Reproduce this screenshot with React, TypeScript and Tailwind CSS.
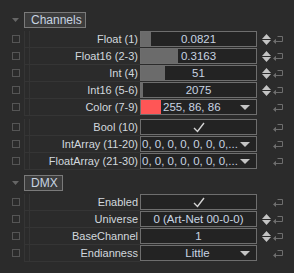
import React from 'react';

const font = { fontFamily: '"Liberation Sans", Arial, sans-serif' };

function Tri({ down = true, w = 10, h = 5, color = '#c4c4c4' }: { down?: boolean; w?: number; h?: number; color?: string }) {
  return (
    <svg width={w} height={h} viewBox={`0 0 ${w} ${h}`} className="block">
      <polygon points={down ? `0,0 ${w},0 ${w / 2},${h}` : `0,${h} ${w},${h} ${w / 2},0`} fill={color} />
    </svg>
  );
}

function Spinner() {
  return (
    <div className="flex flex-col items-center gap-[1px] w-[9px]">
      <Tri down={false} w={9} h={5} />
      <Tri w={9} h={5} />
    </div>
  );
}

function ResetIcon() {
  return (
    <svg width="11" height="9" viewBox="0 0 11 9" className="block">
      <path d="M4.5 1.5 H9.5 V6.5 H2.5" fill="none" stroke="#6e6e6e" strokeWidth="1" />
      <polygon points="0,6.5 3,3.8 3,9" fill="#6e6e6e" />
    </svg>
  );
}

function Check() {
  return (
    <svg width="12" height="11" viewBox="0 0 12 11" className="block">
      <path d="M1 6 L4.5 9.5 L11 1" fill="none" stroke="#d4d4d4" strokeWidth="1.4" />
    </svg>
  );
}

function Section({ title, w }: { title: string; w: string }) {
  return (
    <div className="flex items-center h-[15px]">
      <div className="w-[24px] flex justify-start pl-[12px]">
        <Tri w={7} h={4} color="#666666" />
      </div>
      <div className={`${w} h-[16px] border border-[#7a7a7a] bg-[#3c3c3c] text-[12px] leading-[14px] text-[#c8d4e2] pl-[6px]`}>
        {title}
      </div>
    </div>
  );
}

function Row({ label, children, spin = false, extra = '' }: { label: string; children: React.ReactNode; spin?: boolean; extra?: string }) {
  return (
    <div className={`flex h-[17px] ${extra}`}>
      <div className="w-[24px] flex items-start pt-[4px] pl-[12px]">
        <div className="w-[8px] h-[8px] border border-[#555555]" />
      </div>
      <div className="w-[116px] h-[17px] border-l border-[#353535] flex">
        <div className="w-[5px] border-r border-[#353535] border-b" />
        <div className="flex-1 border-b border-[#353535] text-right pr-[2px] text-[11px] leading-[16px] text-[#d2d8de] whitespace-nowrap">
          {label}
        </div>
      </div>
      <div className="w-[117px] h-[16px] border border-[#6e6e6e] bg-[#232323] relative overflow-hidden text-[11.5px] leading-[14px] text-[#c8d4e2]">
        {children}
      </div>
      <div className="w-[14px] flex items-center justify-end h-[16px]">{spin && <Spinner />}</div>
      <div className="flex items-center h-[16px] pl-[2px]">
        <ResetIcon />
      </div>
    </div>
  );
}

function Bar({ value, pct }: { value: string; pct: number }) {
  return (
    <>
      <div className="absolute left-0 top-0 bottom-0 bg-[#6b6b6b]" style={{ width: `${pct}px` }} />
      <div className="relative text-center">{value}</div>
    </>
  );
}

function Dropdown({ text, center = false }: { text: string; center?: boolean }) {
  return (
    <div className="flex items-center h-full">
      <div className={`flex-1 pl-[1px] whitespace-nowrap overflow-hidden ${center ? 'text-center pl-[14px]' : ''}`}>{text}</div>
      <div className="pr-[6px]">
        <Tri w={10} h={5} />
      </div>
    </div>
  );
}

export default function App() {
  return (
    <div className="w-[294px] h-[273px] bg-[#2b2b2b] pt-[12px] overflow-hidden" style={font}>
      <Section title="Channels" w="w-[62px]" />
      <div className="mt-[4px] flex flex-col">
        <Row label="Float (1)" spin>
          <Bar value="0.0821" pct={10} />
        </Row>
        <Row label="Float16 (2-3)" spin>
          <Bar value="0.3163" pct={37} />
        </Row>
        <Row label="Int (4)" spin>
          <Bar value="51" pct={24} />
        </Row>
        <Row label="Int16 (5-6)" spin>
          <Bar value="2075" pct={2} />
        </Row>
        <Row label="Color (7-9)" extra="mb-[3px]">
          <div className="flex items-center h-full">
            <div className="w-[20px] h-full bg-[#ff5656]" />
            <div className="flex-1 pl-[2px] whitespace-nowrap">255, 86, 86</div>
            <div className="pr-[6px]">
              <Tri w={10} h={5} />
            </div>
          </div>
        </Row>
        <Row label="Bool (10)">
          <div className="flex items-center justify-center h-full">
            <Check />
          </div>
        </Row>
        <Row label="IntArray (11-20)">
          <Dropdown text="0, 0, 0, 0, 0, 0, 0,..." />
        </Row>
        <Row label="FloatArray (21-30)">
          <Dropdown text="0, 0, 0, 0, 0, 0, 0,..." />
        </Row>
      </div>
      <div className="mt-[5px]">
        <Section title="DMX" w="w-[39px]" />
      </div>
      <div className="mt-[4px] flex flex-col">
        <Row label="Enabled">
          <div className="flex items-center justify-center h-full">
            <Check />
          </div>
        </Row>
        <Row label="Universe" spin>
          <div className="text-center">0 (Art-Net 00-0-0)</div>
        </Row>
        <Row label="BaseChannel" spin>
          <div className="text-center">1</div>
        </Row>
        <Row label="Endianness">
          <Dropdown text="Little" center />
        </Row>
      </div>
    </div>
  );
}
